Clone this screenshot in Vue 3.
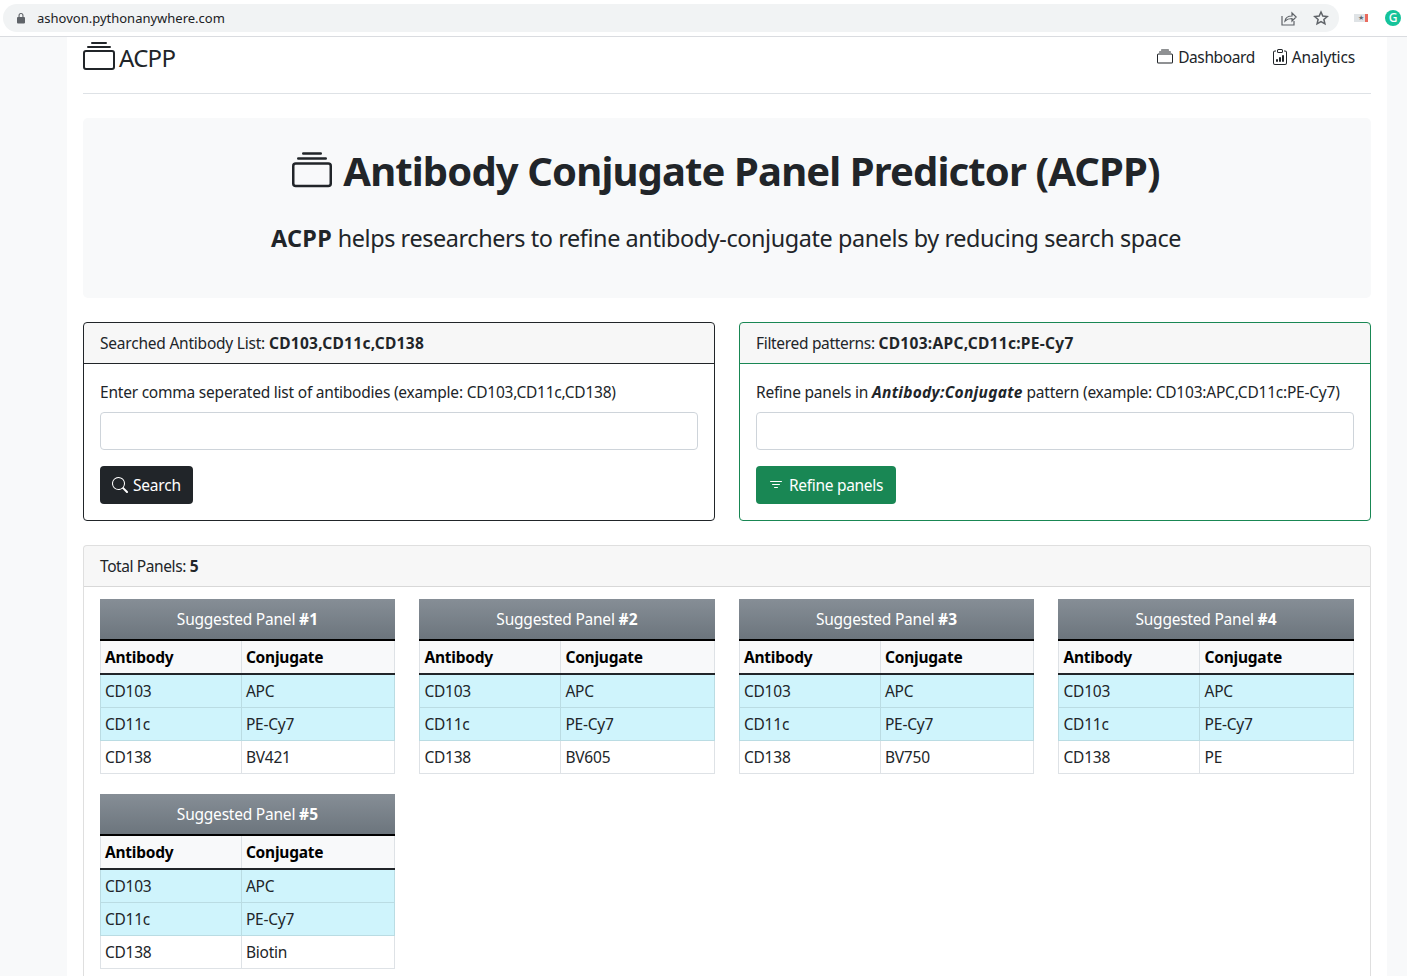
<script setup>
const panels = [
  { id: 1, last: 'BV421' },
  { id: 2, last: 'BV605' },
  { id: 3, last: 'BV750' },
  { id: 4, last: 'PE' },
  { id: 5, last: 'Biotin' }
]
const collection = 'M2.5 3.5a.5.5 0 0 1 0-1h11a.5.5 0 0 1 0 1h-11zm2-2a.5.5 0 0 1 0-1h7a.5.5 0 0 1 0 1h-7zM0 13a1.5 1.5 0 0 0 1.5 1.5h13A1.5 1.5 0 0 0 16 13V6a1.5 1.5 0 0 0-1.5-1.5h-13A1.5 1.5 0 0 0 0 6v7zm1.5.5A.5.5 0 0 1 1 13V6a.5.5 0 0 1 .5-.5h13a.5.5 0 0 1 .5.5v7a.5.5 0 0 1-.5.5h-13z'
</script>

<template>
  <div class="browser">
    <div class="chrome">
      <div class="omnibox">
        <svg class="lock" width="10" height="12" viewBox="0 0 10 12"><path d="M2.5 5V3.4a2.5 2.5 0 0 1 5 0V5h.6c.5 0 .9.4.9.9v4.700c0 .5-.4.9-.9.9H1.900c-.5 0-.9-.4-.9-.9V5.900c0-.5.4-.9.9-.9h.6zm1.100 0h2.800V3.400a1.400 1.400 0 0 0-2.800 0V5z" fill="#5f6368"/></svg>
        <span class="url">ashovon.pythonanywhere.com</span>
        <svg class="share" width="16" height="16" viewBox="0 0 16 16" fill="none" stroke="#5f6368" stroke-width="1.200"><path d="M1 6v9h12v-4"/><path d="M4 11c.5-3.500 3-5 7-5V3l4.200 4-4.200 4V8.500c-3 0-5 .5-7 2.500z"/></svg>
        <svg class="star" width="16" height="16" viewBox="0 0 16 16" fill="none" stroke="#5f6368" stroke-width="1.500"><path d="M8 2l1.800 4.100 4.400.4-3.300 2.900 1 4.400L8 11.500l-3.900 2.300 1-4.400-3.300-2.900 4.400-.4z"/></svg>
      </div>
      <div class="ext-flag"><span class="flag-star">★</span></div>
      <div class="grammarly">G</div>
    </div>

    <div class="page">
      <div class="container">
        <header class="topbar">
          <a class="brand">
            <svg width="32" height="32" viewBox="0 0 16 16" fill="currentColor"><path :d="collection"/></svg>
            <span>ACPP</span>
          </a>
          <nav class="topnav">
            <a class="nav-dash">
              <svg width="16" height="16" viewBox="0 0 16 16" fill="currentColor"><path :d="collection"/></svg>
              Dashboard
            </a>
            <a class="nav-stats">
              <svg width="16" height="16" viewBox="0 0 16 16" fill="currentColor">
                <path d="M4 11a1 1 0 1 1 2 0v1a1 1 0 1 1-2 0v-1zm6-4a1 1 0 1 1 2 0v5a1 1 0 1 1-2 0V7zM7 9a1 1 0 0 1 2 0v3a1 1 0 1 1-2 0V9z"/>
                <path d="M4 1.500H3a2 2 0 0 0-2 2V14a2 2 0 0 0 2 2h10a2 2 0 0 0 2-2V3.500a2 2 0 0 0-2-2h-1v1h1a1 1 0 0 1 1 1V14a1 1 0 0 1-1 1H3a1 1 0 0 1-1-1V3.500a1 1 0 0 1 1-1h1v-1z"/>
                <path d="M9.500 1a.5.5 0 0 1 .5.5v1a.5.5 0 0 1-.5.5h-3a.5.5 0 0 1-.5-.5v-1a.5.5 0 0 1 .5-.5h3zm-3-1A1.500 1.500 0 0 0 5 1.500v1A1.500 1.500 0 0 0 6.500 4h3A1.500 1.500 0 0 0 11 2.500v-1A1.500 1.500 0 0 0 9.500 0h-3z"/>
              </svg>
              Analytics
            </a>
          </nav>
        </header>

        <section class="hero">
          <h1>
            <svg width="40" height="40" viewBox="0 0 16 16" fill="currentColor"><path :d="collection"/></svg>
            Antibody Conjugate Panel Predictor (ACPP)
          </h1>
          <p><b>ACPP</b> helps researchers to refine antibody-conjugate panels by reducing search space</p>
        </section>

        <div class="forms">
          <div class="card dark">
            <div class="card-header">Searched Antibody List: <b>CD103,CD11c,CD138</b></div>
            <div class="card-body">
              <label>Enter comma seperated list of antibodies (example: CD103,CD11c,CD138)</label>
              <input type="text" />
              <button class="btn btn-dark">
                <svg width="16" height="16" viewBox="0 0 16 16" fill="currentColor"><path d="M11.742 10.344a6.500 6.500 0 1 0-1.397 1.398h-.001c.03.04.062.078.098.115l3.850 3.850a1 1 0 0 0 1.415-1.414l-3.850-3.850a1.007 1.007 0 0 0-.115-.1zM12 6.500a5.500 5.500 0 1 1-11 0 5.500 5.500 0 0 1 11 0z"/></svg>
                Search
              </button>
            </div>
          </div>
          <div class="card green">
            <div class="card-header">Filtered patterns: <b>CD103:APC,CD11c:PE-Cy7</b></div>
            <div class="card-body">
              <label>Refine panels in <b><i>Antibody:Conjugate</i></b> pattern (example: CD103:APC,CD11c:PE-Cy7)</label>
              <input type="text" />
              <button class="btn btn-green">
                <svg width="16" height="16" viewBox="0 0 16 16" fill="currentColor"><path d="M6 10.500a.5.5 0 0 1 .5-.5h3a.5.5 0 0 1 0 1h-3a.5.5 0 0 1-.5-.5zm-2-3a.5.5 0 0 1 .5-.5h7a.5.5 0 0 1 0 1h-7a.5.5 0 0 1-.5-.5zm-2-3a.5.5 0 0 1 .5-.5h11a.5.5 0 0 1 0 1h-11a.5.5 0 0 1-.5-.5z"/></svg>
                Refine panels
              </button>
            </div>
          </div>
        </div>

        <div class="card results">
          <div class="card-header">Total Panels: <b>5</b></div>
          <div class="results-body">
            <table v-for="p in panels" :key="p.id" class="panel">
              <caption>Suggested Panel <b>#{{ p.id }}</b></caption>
              <thead>
                <tr><th>Antibody</th><th>Conjugate</th></tr>
              </thead>
              <tbody>
                <tr class="hit"><td>CD103</td><td>APC</td></tr>
                <tr class="hit"><td>CD11c</td><td>PE-Cy7</td></tr>
                <tr><td>CD138</td><td>{{ p.last }}</td></tr>
              </tbody>
            </table>
          </div>
        </div>
      </div>
    </div>
  </div>
</template>

<style>
html, body { margin: 0; height: 976px; overflow: hidden; }
</style>

<style scoped>
.browser {
  height: 976px;
  overflow: hidden;
  font-family: "Noto Sans", "Open Sans", sans-serif;
  font-size: 15.5px;
  letter-spacing: -0.22px;
  color: #212529;
  background: #f8f9fa;
}
b { letter-spacing: 0.3px; }
.chrome {
  height: 36px;
  border-bottom: 1px solid #dadce0;
  background: #fff;
  display: flex;
  align-items: center;
  padding: 0 5px 0 3px;
}
.omnibox {
  width: 1336px;
  height: 28px;
  border-radius: 14px;
  background: #f1f3f4;
  display: flex;
  align-items: center;
  box-sizing: border-box;
  padding: 0 10px 0 13px;
}
.url { margin-left: 11px; font-size: 13px; letter-spacing: 0; color: #202124; flex: 1; }
.share { margin-right: 16px; }
.ext-flag {
  margin-left: 15px;
  width: 14px;
  height: 8px;
  background: linear-gradient(90deg, #dfe3e6 0 78%, #ea6a5e 78%);
  display: flex;
  align-items: center;
  justify-content: center;
  overflow: hidden;
}
.flag-star { font-size: 7px; line-height: 8px; color: #5f6b76; }
.grammarly {
  margin-left: 17px;
  width: 16px;
  height: 16px;
  border-radius: 50%;
  background: #15c39a;
  color: #fff;
  font-size: 12px;
  font-weight: 500;
  line-height: 16px;
  text-align: center;
}
.page { height: 939px; }
.container {
  width: 1288px;
  height: 939px;
  margin-left: 67px;
  padding: 0 16px;
  background: #fff;
}
.topbar {
  height: 56px;
  border-bottom: 1px solid #dee2e6;
  display: flex;
  justify-content: space-between;
  margin-bottom: 24px;
}
.brand {
  display: flex;
  align-items: center;
  gap: 4px;
  height: 40px;
  font-size: 24px;
  letter-spacing: -0.7px;
}
.topnav {
  display: flex;
  gap: 17px;
  padding: 8px 16px 0 0;
}
.topnav a { display: flex; align-items: center; height: 24px; }
.nav-dash { gap: 5px; letter-spacing: -0.4px; }
.nav-stats { gap: 4px; letter-spacing: -0.15px; }
.hero {
  height: 180px;
  box-sizing: border-box;
  background: #f8f9fa;
  border-radius: 5px;
  padding: 24px 2px 0 0;
  text-align: center;
  margin-bottom: 24px;
}
.hero h1 {
  margin: 0;
  font-size: 40px;
  font-weight: 700;
  line-height: 58px;
  letter-spacing: -0.87px;
  display: flex;
  justify-content: center;
  align-items: center;
  gap: 11px;
}
.hero p { margin: 20px 0 0; font-size: 23.4px; line-height: 36px; letter-spacing: -0.4px; }
.hero p b { letter-spacing: 0.3px; }
.forms {
  display: grid;
  grid-template-columns: 1fr 1fr;
  gap: 24px;
  margin-bottom: 24px;
}
.card {
  border: 1px solid rgba(0, 0, 0, .125);
  border-radius: 4px;
  background: #fff;
  overflow: hidden;
}
.card.dark { border-color: #212529; }
.card.green { border-color: #198754; }
.card-header {
  height: 40px;
  box-sizing: content-box;
  line-height: 40px;
  padding: 0 16px;
  background: rgba(0, 0, 0, .03);
  border-bottom: 1px solid rgba(0, 0, 0, .125);
}
.dark .card-header { border-bottom-color: #212529; }
.green .card-header { border-bottom-color: #198754; letter-spacing: -0.32px; }
.results .card-header { letter-spacing: -0.4px; }
.card-body { padding: 16px; height: 124px; }
label { display: block; line-height: 24px; margin-bottom: 8px; }
input {
  display: block;
  width: 100%;
  height: 38px;
  box-sizing: border-box;
  border: 1px solid #ced4da;
  border-radius: 4px;
  margin-bottom: 16px;
}
.btn {
  height: 38px;
  box-sizing: border-box;
  border: 0;
  border-radius: 4px;
  padding: 0 12px;
  font: inherit;
  letter-spacing: inherit;
  color: #fff;
  display: inline-flex;
  align-items: center;
  gap: 5px;
}
.btn-dark { background: #212529; }
.btn-green { background: #198754; padding: 0 13px; gap: 4px; letter-spacing: -0.3px; }
.btn-green svg { margin-right: 1px; margin-left: -1px; }
.results-body {
  padding: 12px 16px 16px 15.9px;
  display: grid;
  grid-template-columns: repeat(4, 1fr);
  column-gap: 24px;
  row-gap: 20.5px;
}
.panel {
  width: 100%;
  border-collapse: collapse;
  table-layout: fixed;
}
.panel caption {
  caption-side: top;
  height: 40px;
  line-height: 40px;
  color: #fff;
  background: linear-gradient(#868e96, #6c757d);
  text-align: center;
}
.panel th, .panel td {
  border: 1px solid #dee2e6;
  padding: 0 4px;
  height: 33px;
  box-sizing: border-box;
  text-align: left;
}
.panel th:first-child, .panel td:first-child { width: 141px; }
.panel thead th {
  height: 34px;
  color: #000;
  background: #f8f9fa;
  border-top: 2px solid #000;
  border-bottom: 2px solid #212529;
}
.hit td { background: #cff4fc; border-color: #badce3; }
</style>
